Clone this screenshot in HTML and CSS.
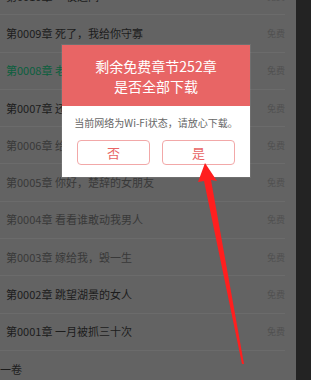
FILE: index.html
```html
<!DOCTYPE html>
<html lang="zh">
<head>
<meta charset="utf-8">
<link rel="stylesheet" href="styles.css">
</head>
<body>
<div class="screen">
  <div class="list">
    <div class="row"><span class="title dark">第0010章 一夜之间</span><span class="free">免费</span></div>
    <div class="row"><span class="title dark">第0009章 死了，我给你守寡</span><span class="free">免费</span></div>
    <div class="row"><span class="title green">第0008章 老公，你回来了</span><span class="free">免费</span></div>
    <div class="row"><span class="title dark">第0007章 还是原来的样子</span><span class="free">免费</span></div>
    <div class="row"><span class="title mid">第0006章 给我一个理由</span><span class="free">免费</span></div>
    <div class="row"><span class="title mid">第0005章 你好，楚辞的女朋友</span><span class="free">免费</span></div>
    <div class="row"><span class="title mid">第0004章 看看谁敢动我男人</span><span class="free">免费</span></div>
    <div class="row"><span class="title mid">第0003章 嫁给我，毁一生</span><span class="free">免费</span></div>
    <div class="row"><span class="title dark">第0002章 跳望湖景的女人</span><span class="free">免费</span></div>
    <div class="row"><span class="title dark">第0001章 一月被抓三十次</span><span class="free">免费</span></div>
    <div class="volume">第一卷</div>
  </div>
  <div class="sidebar"></div>

  <div class="dialog">
    <div class="dialog-head">
      <div>剩余免费章节252章</div>
      <div>是否全部下载</div>
    </div>
    <div class="dialog-body">
      <p class="msg">当前网络为Wi-Fi状态，请放心下载。</p>
      <div class="actions">
        <button class="btn">否</button>
        <button class="btn">是</button>
      </div>
    </div>
  </div>

  <svg class="arrow" width="311" height="380" viewBox="0 0 311 380">
    <polygon points="205,163 217,181 211,180 244,364 242,364 204,181 198,182" fill="#ff1f1f"/>
  </svg>
</div>
</body>
</html>
```

FILE: styles.css
```css
* { box-sizing: border-box; }
html, body {
  margin: 0;
  padding: 0;
  width: 311px;
  height: 380px;
  overflow: hidden;
  background: #636363;
  font-family: "Noto Sans CJK SC", "Noto Sans", sans-serif;
}
.screen {
  position: relative;
  width: 311px;
  height: 380px;
  display: flex;
  overflow: hidden;
}
.list {
  flex: 1;
  margin-top: -22px;
  padding-left: 6px;
}
.sidebar {
  width: 15px;
  background: #232323;
}
.row {
  height: 37.3px;
  display: flex;
  align-items: center;
  justify-content: space-between;
  border-bottom: 1px solid #6b6b6b;
  margin-right: 11px;
  margin-left: -6px;
  padding-left: 6px;
}
.title {
  font-size: 11px;
  line-height: 1;
}
.dark { color: #1c1c1c; }
.mid { color: #393939; }
.green { color: #0b5f3e; }
.free {
  font-size: 9px;
  color: #505050;
}
.volume {
  height: 37px;
  display: flex;
  align-items: center;
  margin-left: -17px;
  font-size: 11px;
  color: #1c1c1c;
}
.dialog {
  position: absolute;
  left: 62px;
  top: 45px;
  width: 188px;
  box-shadow: 0 0 0 1px rgba(255,255,255,0.08);
}
.dialog-head {
  height: 61px;
  background: #e86565;
  color: #fff;
  font-size: 14px;
  line-height: 20px;
  text-align: center;
  padding-top: 11px;
}
.dialog-body {
  background: #fff;
  height: 71px;
  padding-top: 10px;
}
.msg {
  margin: 0;
  font-size: 10px;
  line-height: 14px;
  color: #666;
  text-align: center;
  white-space: nowrap;
}
.actions {
  display: flex;
  justify-content: center;
  gap: 12px;
  margin-top: 10px;
}
.btn {
  width: 73px;
  height: 25px;
  border: 1px solid #f2a8a8;
  border-radius: 4px;
  background: #fff;
  color: #e86565;
  font-family: inherit;
  font-size: 13px;
  padding: 0;
  line-height: 1;
}
.arrow {
  position: absolute;
  left: 0;
  top: 0;
  pointer-events: none;
}
```
